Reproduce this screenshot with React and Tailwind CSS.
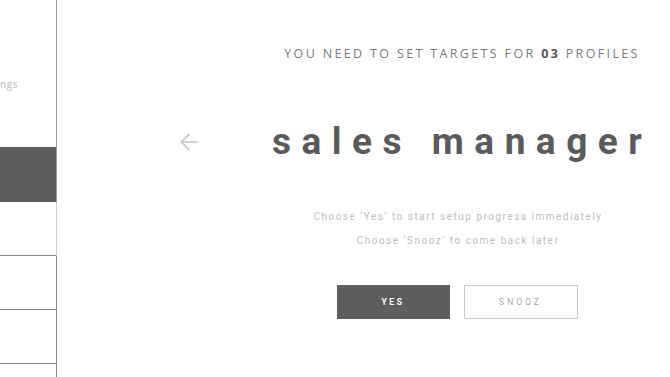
import {ArrowLeft} from 'lucide-react';

const Sidebar = () => {
    return (
        <div className="w-[57px] shrink-0 h-full flex flex-col overflow-hidden">
            <div className="h-[147px] pt-[77px] border-r-[1.5px] border-[#9a9a9a]">
                <span className="block text-[10px] leading-[14px] tracking-[0.6px] text-[#b8b8b8] font-['Open_Sans',sans-serif]">ngs</span>
            </div>
            <div className="h-[55px] bg-[#5d5d5d] border-r-[1.5px] border-[#9a9a9a]"></div>
            <div className="h-[54px] border-b border-r-[1.5px] border-b-[#8a8a8a] border-r-[#cfcfcf]"></div>
            <div className="h-[54px] border-b border-r-[1.5px] border-[#8a8a8a]"></div>
            <div className="h-[54px] border-b border-r-[1.5px] border-[#8a8a8a]"></div>
            <div className="flex-1 border-r-[1.5px] border-[#8a8a8a]"></div>
        </div>
    )
}

const App = () => {
    return (
        <div className="w-[670px] h-[377px] bg-white flex overflow-hidden">
            <Sidebar/>
            <div className="flex-1 flex flex-col">
                <div className="flex pt-[46px]">
                    <div className="w-[189px] shrink-0"></div>
                    <div className="w-[424px] pl-[8px] whitespace-nowrap text-center text-[12.5px] leading-[16px] tracking-[2.35px] text-[#7a7a7a] font-['Open_Sans',sans-serif]">
                        YOU NEED TO SET TARGETS FOR <span className="font-bold text-[#555]">03</span> PROFILES
                    </div>
                </div>

                <div className="flex items-center mt-[58px] h-[44px]">
                    <div className="w-[189px] shrink-0 pl-[119px]">
                        <ArrowLeft className="w-[26px] h-[26px] text-[#c4c4c4]" strokeWidth={1.5}/>
                    </div>
                    <div className="w-[424px] pl-[26px] whitespace-nowrap text-[37px] leading-[44px] font-bold tracking-[10.5px] text-[#5a5a5a] font-['Roboto',sans-serif]">
                        sales manager
                    </div>
                </div>

                <div className="flex mt-[41px]">
                    <div className="w-[189px] shrink-0"></div>
                    <div className="w-[424px] whitespace-nowrap text-center text-[10px] leading-[24px] tracking-[1.5px] text-[#bdbdbd] font-['Roboto',sans-serif]">
                        <p>Choose ‘Yes’ to start setup progress immediately</p>
                        <p>Choose ‘Snooz’ to come back later</p>
                    </div>
                </div>

                <div className="flex mt-[32px]">
                    <div className="w-[189px] shrink-0"></div>
                    <div className="w-[424px] flex justify-center gap-[14px] pr-[2px]">
                        <button className="w-[113px] h-[34px] bg-[#5e5e5e] text-white text-[8.5px] font-bold tracking-[2.5px] font-['Roboto',sans-serif]">
                            YES
                        </button>
                        <button className="w-[114px] h-[34px] border border-[#c8c8c8] text-[#a8a8a8] text-[8.5px] tracking-[3px] font-['Roboto',sans-serif]">
                            SNOOZ
                        </button>
                    </div>
                </div>
            </div>
        </div>
    )
}

export default App;
